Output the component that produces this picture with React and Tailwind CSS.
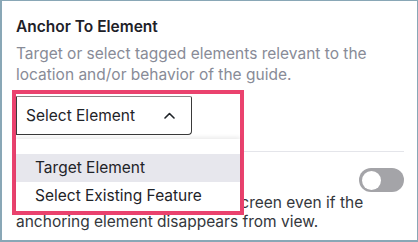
import { Fragment } from 'react';

// ── Chevron ──────────────────────────────────────────────
const ChevronUp = () => (
  <svg width="11" height="7" viewBox="0 0 11 7" fill="none">
    <path d="M1 6 L5.5 1.5 L10 6" stroke="#1f2328" strokeWidth="1.6" strokeLinecap="round" strokeLinejoin="round" />
  </svg>
);

// ── Toggle ───────────────────────────────────────────────
const Toggle = () => (
  <div className="w-[45px] h-[24px] rounded-full bg-[#a4a4a8] p-[2.5px] flex items-center">
    <div className="w-[19px] h-[19px] rounded-full bg-white" />
  </div>
);

export default function App() {
  return (
    <div
      className="relative w-[418px] h-[242px] overflow-hidden bg-white border-t border-r border-l-2 border-b-2 border-[#89a7b6]"
      style={{ fontFamily: 'Inter, "Noto Sans", sans-serif' }}
    >
      <div className="pl-[14px] pr-[13px] pt-[16px]">
        {/* ── Anchor section ── */}
        <h2 className="text-[15.5px] leading-[20px] font-semibold text-[#1e2128]">Anchor To Element</h2>
        <p className="mt-[6px] text-[15.5px] leading-[21px] text-[#888b97]">
          Target or select tagged elements relevant to the location and/or behavior of the guide.
        </p>
        <div className="mt-[10px] h-[38px] w-[176px] border border-[#3a3a3a] rounded-[4px]" />

        {/* ── Divider ── */}
        <div className="mt-[18px] h-px bg-[#e4e5ea]" />

        {/* ── Fixed position section ── */}
        <div className="mt-[16px] flex items-center justify-end">
          <Toggle />
        </div>
        <p className="mt-[1px] text-[15.5px] leading-[19px] text-[#34373c]">
          Keep the guide visible on the screen even if the anchoring element disappears from view.
        </p>
      </div>

      {/* ── Highlighted dropdown (annotation overlay) ── */}
      <div className="absolute left-[10px] top-[89px] w-[232px] h-[125px] border-[4px] border-[#ea426e] bg-white flex flex-col">
        <div className="mt-[2px] h-[39px] w-[176px] border border-[#3a3a3a] border-t-[#8a8a8a] rounded-br-[4px] rounded-tr-[2px] flex items-center justify-between pl-[9px] pr-[16px]">
          <span className="text-[15.5px] text-[#1f2328]">Select Element</span>
          <ChevronUp />
        </div>
        <div className="mt-[4px] flex-1 pt-[15px] shadow-[0_-2px_4px_rgba(0,0,0,0.08)]">
          {['Target Element', 'Select Existing Feature'].map((label, i) => (
            <Fragment key={label}>
              <div
                className={`h-[28px] flex items-center pl-[19px] text-[15.5px] text-[#1f2328] ${
                  i === 0 ? 'bg-[#e7e7ed]' : ''
                }`}
              >
                {label}
              </div>
            </Fragment>
          ))}
        </div>
      </div>
    </div>
  );
}
